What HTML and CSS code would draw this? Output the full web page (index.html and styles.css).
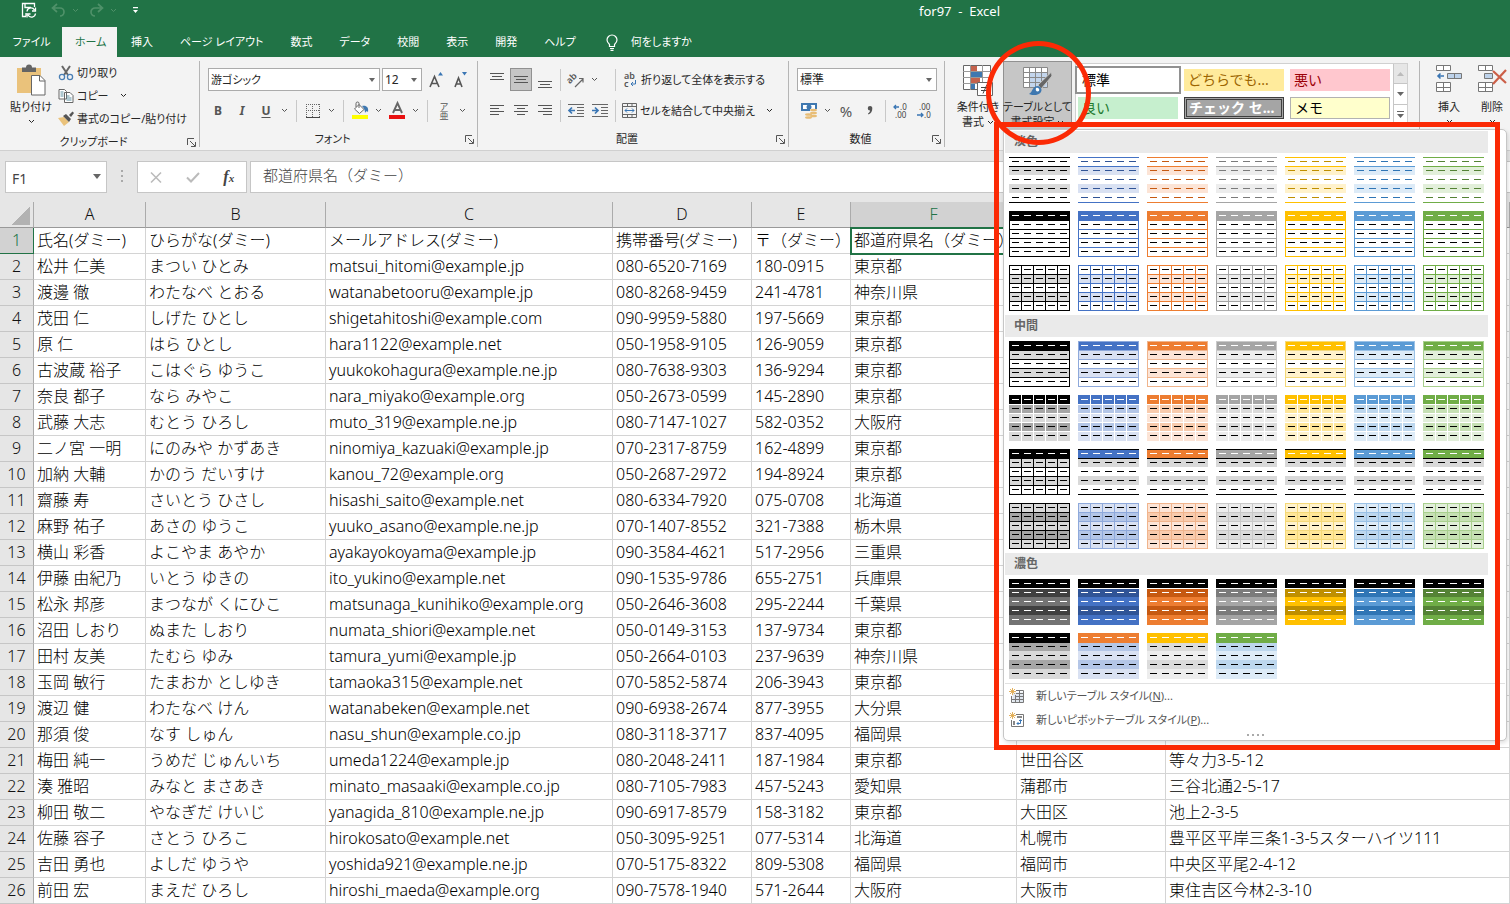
FILE: index.html
```html
<!DOCTYPE html>
<html lang="ja">
<head>
<meta charset="utf-8">
<title>for97 - Excel</title>
<link rel="stylesheet" href="styles.css">
</head>
<body>
<svg class="defs" aria-hidden="true">
  <defs>
    <symbol id="chev" viewBox="0 0 7 5"><path d="M1 1l2.5 2.5L6 1" fill="none" stroke="currentColor"/></symbol>
    <symbol id="launch" viewBox="0 0 9 9"><path d="M.5 7V.5H7M3 3l5 5M8.500 4v4.500H4" fill="none" stroke="#555"/></symbol>
    <g id="head-dash"><path d="M3 4.500h55" stroke-dasharray="7 5"/></g>
    <g id="body-dash"><path d="M3 13.500h55M3 22.500h55M3 31.500h55M3 40.500h55" stroke-dasharray="7 5"/></g>
    <g id="h-lines"><path d="M0 .5h61M0 9.500h61M0 18.500h61M0 27.500h61M0 36.500h61M0 45.500h61"/></g>
    <g id="v-lines"><path d="M.5 0v46M12.500 0v46M24.500 0v46M36.500 0v46M48.500 0v46M60.500 0v46"/></g>
    <g id="v-inner"><path d="M12.500 0v46M24.500 0v46M36.500 0v46M48.500 0v46"/></g>
    <path id="bands" d="M0 9h61v9H0zM0 27h61v9H0z"/>
    <path id="bands2" d="M0 18h61v9H0zM0 36h61v10H0z"/>
    <symbol id="l1" viewBox="0 0 61 46"><use href="#bands" class="f-light"/><path class="s-c" d="M0 .5h61M0 9.500h61M0 45.500h61"/><use href="#head-dash" class="s-dark"/><use href="#body-dash" class="s-dark"/></symbol>
    <symbol id="l2" viewBox="0 0 61 46"><path class="f-c" d="M0 0h61v9H0z"/><use href="#h-lines" class="s-c"/><path class="s-c" d="M.5 0v46M60.500 0v46"/><use href="#head-dash" class="s-w"/><use href="#body-dash" class="s-k"/></symbol>
    <symbol id="l3" viewBox="0 0 61 46"><use href="#bands" class="f-light"/><use href="#h-lines" class="s-c"/><use href="#v-lines" class="s-c"/><use href="#head-dash" class="s-k"/><use href="#body-dash" class="s-k"/></symbol>
    <symbol id="m1" viewBox="0 0 61 46"><path class="f-c" d="M0 0h61v9H0z"/><use href="#bands" class="f-light"/><use href="#h-lines" class="s-m"/><path class="s-m" d="M.5 0v46M60.500 0v46"/><use href="#head-dash" class="s-w"/><use href="#body-dash" class="s-k"/></symbol>
    <symbol id="m2" viewBox="0 0 61 46"><path class="f-c" d="M0 0h61v9H0z"/><use href="#bands" class="f-mid"/><use href="#bands2" class="f-light"/><use href="#v-inner" class="s-w"/><path class="s-w" d="M0 9.500h61M0 18.500h61M0 27.500h61M0 36.500h61"/><use href="#head-dash" class="s-w"/><use href="#body-dash" class="s-k"/></symbol>
    <symbol id="m3" viewBox="0 0 61 46"><path class="f-c" d="M0 0h61v9H0z"/><use href="#bands" class="f-gray"/><path class="s-k" d="M0 .5h61M0 9.500h61M0 45.500h61"/><use href="#head-dash" class="s-w"/><use href="#body-dash" class="s-k"/></symbol>
    <symbol id="m3k" viewBox="0 0 61 46"><use href="#bands" class="f-gray"/><use href="#h-lines" class="s-k"/><use href="#v-lines" class="s-k"/><path d="M0 0h61v9H0z"/><use href="#head-dash" class="s-w"/><use href="#body-dash" class="s-k"/></symbol>
    <symbol id="m4" viewBox="0 0 61 46"><path class="f-light" d="M0 0h61v46H0z"/><use href="#bands" class="f-mid"/><use href="#h-lines" class="s-m"/><use href="#v-lines" class="s-m"/><use href="#head-dash" class="s-k"/><use href="#body-dash" class="s-k"/></symbol>
    <symbol id="d1" viewBox="0 0 61 46"><path d="M0 0h61v9H0z"/><use href="#bands" class="f-deep"/><use href="#bands2" class="f-deep2"/><path class="s-w" d="M0 9.500h61"/><use href="#head-dash" class="s-w"/><use href="#body-dash" class="s-w"/></symbol>
    <symbol id="d2" viewBox="0 0 61 46"><path class="f-h" d="M0 0h61v10H0z"/><use href="#bands" class="f-mid"/><use href="#bands2" class="f-light"/><path class="f-h" d="M0 9h61v1H0z"/><use href="#head-dash" class="s-w"/><use href="#body-dash" class="s-k"/></symbol>
  </defs>
</svg>

<div class="app">
  <header class="titlebar">
    <div class="quick">
      <button class="plain" aria-label="上書き保存"><svg width="16" height="16" viewBox="0 0 16 16" fill="none" stroke="#fff" stroke-width="1.300"><path d="M5 14.500H1.500v-13h12V5M4 1.500v4h6M5 14v-3"/><path d="M6 9.500A4 4 0 0 1 13.500 8M14.500 5.500V9H11M14.500 11.500A4 4 0 0 1 7 13M6 15.500V12h3.500"/></svg></button>
      <button class="plain dim" aria-label="元に戻す"><svg width="15" height="14" viewBox="0 0 15 14" fill="none" stroke="currentColor" stroke-width="1.700"><path d="M6 1L1.500 5 6 9M2 5h7a4 4 0 0 1 0 8"/></svg><svg width="7" height="5"><use href="#chev"/></svg></button>
      <button class="plain dim" aria-label="やり直し"><svg width="15" height="14" viewBox="0 0 15 14" fill="none" stroke="currentColor" stroke-width="1.700"><path d="M9 1l4.500 4L9 9M13 5H6a4 4 0 0 0 0 8"/></svg><svg width="7" height="5"><use href="#chev"/></svg></button>
      <button class="plain" aria-label="クイック アクセス"><svg width="7" height="7" viewBox="0 0 7 7" fill="#fff"><path d="M1 0h5v1.300H1zM1 3h5L3.500 6z"/></svg></button>
    </div>
    <h1 class="title">for97&nbsp; -&nbsp; Excel</h1>
  </header>

  <nav class="tabs">
    <button class="tab file">ファイル</button><button class="tab active">ホーム</button><button class="tab">挿入</button><button class="tab">ページ レイアウト</button><button class="tab">数式</button><button class="tab">データ</button><button class="tab">校閲</button><button class="tab">表示</button><button class="tab">開発</button><button class="tab">ヘルプ</button>
    <button class="tab tell"><svg width="12" height="17" viewBox="0 0 12 17" fill="none" stroke="#fff" stroke-width="1.200"><path d="M3.500 12.500V10.500C2 9 1 7.500 1 6a5 5 0 0 1 10 0c0 1.500-1 3-2.500 4.500v2zM4 14.500h4M4.500 16.300h3"/></svg><span>何をしますか</span></button>
  </nav>

  <section class="ribbon">
    <div class="group g-clip">
      <div class="group-body">
        <button class="big paste">
          <svg width="30" height="31" viewBox="0 0 30 31"><path d="M1 3h24v25H1z" fill="#eac27b"/><path d="M6 2.500h4A3 3 0 0 1 16 2.500h4V7H6z" fill="#646464"/><path d="M15.500 10.500h8.500l5 5v14.500H15.500z" fill="#fff" stroke="#666"/><path d="M23.500 10.500v5.500H29" fill="none" stroke="#666"/></svg>
          <span>貼り付け</span><svg width="7" height="5"><use href="#chev"/></svg>
        </button>
        <div class="clip-list">
          <button class="small"><svg width="16" height="16" viewBox="0 0 16 16" fill="none"><path d="M4 1l6 9M12 1L6 10" stroke="#666" stroke-width="2"/><circle cx="4" cy="12" r="2.600" stroke="#4a7fb5" stroke-width="1.300"/><circle cx="12" cy="12" r="2.600" stroke="#4a7fb5" stroke-width="1.300"/></svg><span>切り取り</span></button>
          <button class="small"><svg width="16" height="16" viewBox="0 0 16 16"><path d="M1 1.500h5.500l2 2V11H1zM6.500 4.500H12l3 3v7H6.500z" fill="#fff" stroke="#666"/><path d="M2.500 4h3M2.500 6h3M2.500 8h3M8.500 8h3M8.500 10h5M8.500 12h5" stroke="#5b8fa0"/></svg><span>コピー</span><svg class="c-gap" width="7" height="5"><use href="#chev"/></svg></button>
          <button class="small"><svg width="16" height="16" viewBox="0 0 16 16"><path d="M0 7l6-1 5 5-5 4z" fill="#eac27b"/><path d="M5 5l3-2 5 5-2 3z" fill="#555"/><path d="M11 4l3.500-3.500L16 2l-3 4z" fill="#555"/></svg><span>書式のコピー/貼り付け</span></button>
        </div>
      </div>
      <div class="group-label"><span>クリップボード</span><svg width="9" height="9"><use href="#launch"/></svg></div>
    </div>

    <div class="group g-font">
      <div class="group-rows">
        <div class="row">
          <span class="sel w-font"><select aria-label="フォント"><option>游ゴシック</option></select></span>
          <span class="sel w-size"><select aria-label="サイズ"><option>12</option></select></span>
          <button class="ic"><svg width="14" height="16" viewBox="0 0 14 16"><path d="M1 15L5.500 4.500 10 15M2.500 11.500h6" fill="none" stroke="#555" stroke-width="1.600"/><path d="M9 3.500L11.500 0 14 3.500z" fill="#3a76b4"/></svg></button>
          <button class="ic"><svg width="14" height="16" viewBox="0 0 14 16"><path d="M2 15L5.500 6 9 15M3 12h5" fill="none" stroke="#555" stroke-width="1.600"/><path d="M9 0h5l-2.500 3.500z" fill="#3a76b4"/></svg></button>
        </div>
        <div class="row">
          <button class="ic b">B</button><button class="ic i">I</button><button class="ic u">U</button><button class="cv"><svg width="7" height="5"><use href="#chev"/></svg></button>
          <i class="vs"></i>
          <button class="ic"><svg width="14" height="14" viewBox="0 0 14 14" fill="none" stroke="#666"><path d="M.5 0v13M0 .5h14M13.500 0v13M0 6.500h14M6.500 0v13" stroke-dasharray="1 1"/><path d="M0 13.500h14" stroke="#444"/></svg></button><button class="cv"><svg width="7" height="5"><use href="#chev"/></svg></button>
          <i class="vs"></i>
          <button class="ic"><svg width="17" height="17" viewBox="0 0 17 17"><path d="M0 13h16v4H0z" fill="#ffff00"/><path d="M2.500 7L7 2.500l5 5L7.500 11.500z" fill="#fff" stroke="#666"/><path d="M7 6V1.500a1.500 1.500 0 0 0-3 0V5" fill="none" stroke="#666"/><path d="M10 4c4-1 7 1 6 6-1-1-2-1-3 1 0-3-1-5-3-7z" fill="#3f78b0"/></svg></button><button class="cv"><svg width="7" height="5"><use href="#chev"/></svg></button>
          <button class="ic"><svg width="17" height="17" viewBox="0 0 17 17"><path d="M0 13h16v4H0z" fill="#e81010"/><path d="M4 11L8.500 1 13 11M5.500 8h6" fill="none" stroke="#666" stroke-width="1.900"/></svg></button><button class="cv"><svg width="7" height="5"><use href="#chev"/></svg></button>
          <i class="vs"></i>
          <button class="ic ruby"><span>ア</span><span>亜</span></button><button class="cv"><svg width="7" height="5"><use href="#chev"/></svg></button>
        </div>
      </div>
      <div class="group-label"><span>フォント</span><svg width="9" height="9"><use href="#launch"/></svg></div>
    </div>

    <div class="group g-align">
      <div class="group-rows">
        <div class="row">
          <button class="ic"><svg width="14" height="16" viewBox="0 0 14 16" stroke="#555"><path d="M0 1.500h14M2 4.500h10M0 7.500h14"/></svg></button>
          <button class="ic on"><svg width="14" height="16" viewBox="0 0 14 16" stroke="#555"><path d="M0 4.500h14M2 7.500h10M0 10.500h14"/></svg></button>
          <button class="ic"><svg width="14" height="16" viewBox="0 0 14 16" stroke="#555"><path d="M0 9.500h14M2 12.500h10M0 15.500h14"/></svg></button>
          <i class="vs"></i>
          <button class="ic"><svg width="17" height="16" viewBox="0 0 17 16"><text x="0" y="8" class="ab" transform="rotate(-45 6 8)">ab</text><path d="M7 15L15 7M15 10.500V6.500h-4" fill="none" stroke="#666" stroke-width="1.200"/></svg></button><button class="cv"><svg width="7" height="5"><use href="#chev"/></svg></button>
          <i class="vs push"></i>
          <button class="small wrap"><svg width="13" height="17" viewBox="0 0 13 17"><text x="0" y="8" class="ab">ab</text><text x="0" y="16" class="ab">c</text><path d="M11.500 9v4H7M9 11l-2 2 2 2" fill="none" stroke="#3a76b4"/></svg><span>折り返して全体を表示する</span></button>
        </div>
        <div class="row">
          <button class="ic"><svg width="14" height="11" viewBox="0 0 14 11" stroke="#555"><path d="M0 .5h14M0 3.500h9M0 6.500h14M0 9.500h9"/></svg></button>
          <button class="ic"><svg width="14" height="11" viewBox="0 0 14 11" stroke="#555"><path d="M0 .5h14M3 3.500h8M0 6.500h14M3 9.500h8"/></svg></button>
          <button class="ic"><svg width="14" height="11" viewBox="0 0 14 11" stroke="#555"><path d="M0 .5h14M5 3.500h9M0 6.500h14M5 9.500h9"/></svg></button>
          <i class="vs"></i>
          <button class="ic"><svg width="17" height="14" viewBox="0 0 17 14"><path d="M0 .5h16M9 3.500h7M9 6.500h7M9 9.500h7M0 12.500h16" stroke="#666"/><path d="M7 6.500H1M4 3.500l-3 3 3 3" stroke="#3a76b4" stroke-width="1.700" fill="none"/></svg></button>
          <button class="ic"><svg width="17" height="14" viewBox="0 0 17 14"><path d="M0 .5h16M9 3.500h7M9 6.500h7M9 9.500h7M0 12.500h16" stroke="#666"/><path d="M0 6.500h6M3 3.500l3 3-3 3" stroke="#3a76b4" stroke-width="1.700" fill="none"/></svg></button>
          <i class="vs"></i>
          <button class="small merge"><svg width="15" height="15" viewBox="0 0 15 15" fill="none"><path d="M.5.5h14v14H.5zM.5 3.500h14M.5 11.500h14M5.500 .5v3M10 .5v3M5.500 11.500v3M10 11.500v3" stroke="#666"/><path d="M3 7.500h9M5 5.500l-2 2 2 2M10 5.500l2 2-2 2" stroke="#3a76b4"/></svg><span>セルを結合して中央揃え</span><svg class="c-gap" width="7" height="5"><use href="#chev"/></svg></button>
        </div>
      </div>
      <div class="group-label"><span>配置</span><svg width="9" height="9"><use href="#launch"/></svg></div>
    </div>

    <div class="group g-num">
      <div class="group-rows">
        <div class="row"><span class="sel w-num"><select aria-label="表示形式"><option>標準</option></select></span></div>
        <div class="row">
          <button class="ic"><svg width="17" height="17" viewBox="0 0 17 17"><path d="M0 1h16v8H0z" fill="#3f78b0"/><path d="M2 3h12v4H2z" fill="#fff"/><circle cx="8" cy="5" r="2.500" fill="#3f78b0"/><path d="M9 7h7v7H9z" fill="#f3f3f3"/><g fill="#e8bd76"><ellipse cx="12.500" cy="8" rx="3.500" ry="1.300"/><ellipse cx="12.500" cy="11" rx="3.500" ry="1.300"/><ellipse cx="12.500" cy="14" rx="3.500" ry="1.300"/><ellipse cx="7.500" cy="12.500" rx="3.500" ry="1.300"/><ellipse cx="7.500" cy="15.500" rx="3.500" ry="1.300"/></g></svg></button><button class="cv"><svg width="7" height="5"><use href="#chev"/></svg></button>
          <button class="ic pct">%</button>
          <button class="ic"><svg width="6" height="9" viewBox="0 0 6 9"><path d="M3 0a2.300 2.300 0 0 1 2.300 2.500C5.300 5.500 4 7.500 1.500 8.500l-.5-1C2.500 6.500 3 5.500 3 4.500A2.200 2.200 0 0 1 3 0z" fill="#555"/></svg></button>
          <i class="vs"></i>
          <button class="ic"><svg width="16" height="16" viewBox="0 0 16 16"><text x="7" y="7" class="dec">.0</text><text x="2" y="15" class="dec">.00</text><path d="M6 4H1M3 2L1 4l2 2" fill="none" stroke="#3a76b4" stroke-width="1.300"/></svg></button>
          <button class="ic"><svg width="16" height="16" viewBox="0 0 16 16"><text x="2" y="7" class="dec">.00</text><text x="7" y="15" class="dec">.0</text><path d="M0 12h6M4 10l2 2-2 2" fill="none" stroke="#3a76b4" stroke-width="1.300"/></svg></button>
        </div>
      </div>
      <div class="group-label"><span>数値</span><svg width="9" height="9"><use href="#launch"/></svg></div>
    </div>

    <div class="group g-style">
      <button class="big cond">
        <svg width="31" height="31" viewBox="0 0 31 31"><path d="M.5.500h27v24H.5z" fill="#fff" stroke="#666"/><path d="M8 1h6v5H8zM8 13h9v5H8z" fill="#c5634d"/><path d="M8 7h11v5H8zM8 19h4v5H8z" fill="#3f78b0"/><path d="M7.500 0v25M19.500 0v25M0 6.500h28M0 12.500h28M0 18.500h28" fill="none" stroke="#999"/><path d="M14.500 17.500h15v13h-15z" fill="#fff" stroke="#666"/><path d="M18 22.500h8M18 25.500h8M24 19.500l-4 9" stroke="#444"/></svg>
        <span>条件付き<br>書式 <svg width="7" height="5"><use href="#chev"/></svg></span>
      </button>
      <button class="big fmt">
        <svg width="31" height="31" viewBox="0 0 31 31"><path d="M1.500 2.500h24v20h-24z" fill="#fff"/><path d="M7 8h19v14H7z" fill="#c3d5ec"/><path d="M1.500 2.500h24v20h-24zM7.500 2.500v20M13.500 2.500v20M19.500 2.500v20M1.500 7.500h24M1.500 12.500h24M1.500 17.500h24" fill="none" stroke="#888"/><path d="M29.500 7L16 20l3 4 11-13z" fill="#666" stroke="#c6c6c6"/><path d="M7 29c4-2 3-8 9-8 5 1 5 8-2 9-3 0-5 0-7-1z" fill="#3f78b0"/><path d="M14 23c2-1 4 1 3 3-2 1-4 0-3-3z" fill="#fff"/></svg>
        <span>テーブルとして<br>書式設定 <svg width="7" height="5"><use href="#chev"/></svg></span>
      </button>
      <div class="gallery">
        <div class="cells">
          <button class="st normal">標準</button><button class="st neutral">どちらでも...</button><button class="st bad">悪い</button>
          <button class="st good">良い</button><button class="st check">チェック セ...</button><button class="st memo">メモ</button>
        </div>
        <div class="scroll">
          <button class="off" aria-label="上"><svg width="7" height="4" viewBox="0 0 7 4"><path d="M0 4h7L3.500 0z" fill="#bbb"/></svg></button>
          <button aria-label="下"><svg width="7" height="4" viewBox="0 0 7 4"><path d="M0 0h7L3.500 4z" fill="#666"/></svg></button>
          <button aria-label="その他"><svg width="7" height="7" viewBox="0 0 7 7"><path d="M0 0h7v1H0zM0 3h7L3.500 7z" fill="#666"/></svg></button>
        </div>
      </div>
    </div>

    <div class="group g-cells">
      <button class="big"><svg width="27" height="29" viewBox="0 0 27 29"><path d="M.5.500h14v5H.5zM7.500 .5v5M.5 17.500h14v9H.5zM7.500 17.500v9M.5 22.500h14" fill="#fff" stroke="#777"/><path d="M11.500 8.500h14v5h-14zM18.500 8.500v5" fill="#bdd2ea" stroke="#777"/><path d="M8 11H2M4.500 8.500L2 11l2.500 2.500" fill="none" stroke="#3a76b4" stroke-width="1.600"/></svg><span>挿入</span><svg width="7" height="5"><use href="#chev"/></svg></button>
      <button class="big"><svg width="29" height="29" viewBox="0 0 29 29"><path d="M.5.500h14v5H.5zM7.500 .5v5M.5 17.500h14v9H.5zM7.500 17.500v9M.5 22.500h14" fill="#fff" stroke="#777"/><path d="M6.500 8.500h8v5h-8z" fill="#bdd2ea" stroke="#777"/><path d="M15 6l13 12M28 5L15 19" fill="none" stroke="#cc5f48" stroke-width="2.200"/></svg><span>削除</span><svg width="7" height="5"><use href="#chev"/></svg></button>
    </div>
  </section>

  <section class="formula">
    <label class="namebox"><input value="F1" aria-label="名前ボックス"></label>
    <svg class="grip" width="2" height="12" viewBox="0 0 2 12" fill="#aaa"><path d="M0 0h2v2H0zM0 5h2v2H0zM0 10h2v2H0z"/></svg>
    <div class="fx">
      <button aria-label="キャンセル"><svg width="12" height="11" viewBox="0 0 12 11"><path d="M1 .5l10 10M11 .5l-10 10" stroke="#bbb" stroke-width="1.600"/></svg></button>
      <button aria-label="入力"><svg width="14" height="11" viewBox="0 0 14 11"><path d="M1 5.500l4 4L13 1" fill="none" stroke="#bbb" stroke-width="2"/></svg></button>
      <button class="fn">f<small>x</small></button>
    </div>
    <input class="fbar" value="都道府県名（ダミー）" aria-label="数式バー">
  </section>

  <table class="sheet">
    <colgroup><col class="c0"><col class="ca"><col class="cb"><col class="cc"><col class="cd"><col class="ce"><col class="cf"><col class="cg"><col></colgroup>
    <thead><tr><th class="corner"></th><th>A</th><th>B</th><th>C</th><th>D</th><th>E</th><th class="cur">F</th><th>G</th><th>H</th></tr></thead>
    <tbody>
      <tr><th class="cur">1</th><td>氏名(ダミー)</td><td>ひらがな(ダミー)</td><td>メールアドレス(ダミー)</td><td>携帯番号(ダミー)</td><td>〒（ダミー）</td><td class="selected">都道府県名（ダミー）</td><td></td><td></td></tr>
      <tr><th>2</th><td>松井 仁美</td><td>まつい ひとみ</td><td>matsui_hitomi@example.jp</td><td>080-6520-7169</td><td>180-0915</td><td>東京都</td><td></td><td></td></tr>
      <tr><th>3</th><td>渡邊 徹</td><td>わたなべ とおる</td><td>watanabetooru@example.jp</td><td>080-8268-9459</td><td>241-4781</td><td>神奈川県</td><td></td><td></td></tr>
      <tr><th>4</th><td>茂田 仁</td><td>しげた ひとし</td><td>shigetahitoshi@example.com</td><td>090-9959-5880</td><td>197-5669</td><td>東京都</td><td></td><td></td></tr>
      <tr><th>5</th><td>原 仁</td><td>はら ひとし</td><td>hara1122@example.net</td><td>050-1958-9105</td><td>126-9059</td><td>東京都</td><td></td><td></td></tr>
      <tr><th>6</th><td>古波蔵 裕子</td><td>こはぐら ゆうこ</td><td>yuukokohagura@example.ne.jp</td><td>080-7638-9303</td><td>136-9294</td><td>東京都</td><td></td><td></td></tr>
      <tr><th>7</th><td>奈良 都子</td><td>なら みやこ</td><td>nara_miyako@example.org</td><td>050-2673-0599</td><td>145-2890</td><td>東京都</td><td></td><td></td></tr>
      <tr><th>8</th><td>武藤 大志</td><td>むとう ひろし</td><td>muto_319@example.ne.jp</td><td>080-7147-1027</td><td>582-0352</td><td>大阪府</td><td></td><td></td></tr>
      <tr><th>9</th><td>二ノ宮 一明</td><td>にのみや かずあき</td><td>ninomiya_kazuaki@example.jp</td><td>070-2317-8759</td><td>162-4899</td><td>東京都</td><td></td><td></td></tr>
      <tr><th>10</th><td>加納 大輔</td><td>かのう だいすけ</td><td>kanou_72@example.org</td><td>050-2687-2972</td><td>194-8924</td><td>東京都</td><td></td><td></td></tr>
      <tr><th>11</th><td>齋藤 寿</td><td>さいとう ひさし</td><td>hisashi_saito@example.net</td><td>080-6334-7920</td><td>075-0708</td><td>北海道</td><td></td><td></td></tr>
      <tr><th>12</th><td>麻野 祐子</td><td>あさの ゆうこ</td><td>yuuko_asano@example.ne.jp</td><td>070-1407-8552</td><td>321-7388</td><td>栃木県</td><td></td><td></td></tr>
      <tr><th>13</th><td>横山 彩香</td><td>よこやま あやか</td><td>ayakayokoyama@example.jp</td><td>090-3584-4621</td><td>517-2956</td><td>三重県</td><td></td><td></td></tr>
      <tr><th>14</th><td>伊藤 由紀乃</td><td>いとう ゆきの</td><td>ito_yukino@example.net</td><td>090-1535-9786</td><td>655-2751</td><td>兵庫県</td><td></td><td></td></tr>
      <tr><th>15</th><td>松永 邦彦</td><td>まつなが くにひこ</td><td>matsunaga_kunihiko@example.org</td><td>050-2646-3608</td><td>295-2244</td><td>千葉県</td><td></td><td></td></tr>
      <tr><th>16</th><td>沼田 しおり</td><td>ぬまた しおり</td><td>numata_shiori@example.net</td><td>050-0149-3153</td><td>137-9734</td><td>東京都</td><td></td><td></td></tr>
      <tr><th>17</th><td>田村 友美</td><td>たむら ゆみ</td><td>tamura_yumi@example.jp</td><td>050-2664-0103</td><td>237-9639</td><td>神奈川県</td><td></td><td></td></tr>
      <tr><th>18</th><td>玉岡 敏行</td><td>たまおか としゆき</td><td>tamaoka315@example.net</td><td>070-5852-5874</td><td>206-3943</td><td>東京都</td><td></td><td></td></tr>
      <tr><th>19</th><td>渡辺 健</td><td>わたなべ けん</td><td>watanabeken@example.net</td><td>090-6938-2674</td><td>877-3955</td><td>大分県</td><td></td><td></td></tr>
      <tr><th>20</th><td>那須 俊</td><td>なす しゅん</td><td>nasu_shun@example.co.jp</td><td>080-3118-3717</td><td>837-4095</td><td>福岡県</td><td></td><td></td></tr>
      <tr><th>21</th><td>梅田 純一</td><td>うめだ じゅんいち</td><td>umeda1224@example.jp</td><td>080-2048-2411</td><td>187-1984</td><td>東京都</td><td>世田谷区</td><td>等々力3-5-12</td></tr>
      <tr><th>22</th><td>湊 雅昭</td><td>みなと まさあき</td><td>minato_masaaki@example.co.jp</td><td>080-7105-7983</td><td>457-5243</td><td>愛知県</td><td>蒲郡市</td><td>三谷北通2-5-17</td></tr>
      <tr><th>23</th><td>柳田 敬二</td><td>やなぎだ けいじ</td><td>yanagida_810@example.ne.jp</td><td>090-6917-8579</td><td>158-3182</td><td>東京都</td><td>大田区</td><td>池上2-3-5</td></tr>
      <tr><th>24</th><td>佐藤 容子</td><td>さとう ひろこ</td><td>hirokosato@example.net</td><td>050-3095-9251</td><td>077-5314</td><td>北海道</td><td>札幌市</td><td>豊平区平岸三条1-3-5スターハイツ111</td></tr>
      <tr><th>25</th><td>吉田 勇也</td><td>よしだ ゆうや</td><td>yoshida921@example.ne.jp</td><td>070-5175-8322</td><td>809-5308</td><td>福岡県</td><td>福岡市</td><td>中央区平尾2-4-12</td></tr>
      <tr><th>26</th><td>前田 宏</td><td>まえだ ひろし</td><td>hiroshi_maeda@example.org</td><td>090-7578-1940</td><td>571-2644</td><td>大阪府</td><td>大阪市</td><td>東住吉区今林2-3-10</td></tr>
    </tbody>
  </table>

  <div class="menu">
    <h2>淡色</h2>
    <div class="thumbs">
      <button class="k"><svg><use href="#l1"/></svg></button><button class="bl"><svg><use href="#l1"/></svg></button><button class="or"><svg><use href="#l1"/></svg></button><button class="gy"><svg><use href="#l1"/></svg></button><button class="ye"><svg><use href="#l1"/></svg></button><button class="sk"><svg><use href="#l1"/></svg></button><button class="gr"><svg><use href="#l1"/></svg></button>
      <button class="k"><svg><use href="#l2"/></svg></button><button class="bl"><svg><use href="#l2"/></svg></button><button class="or"><svg><use href="#l2"/></svg></button><button class="gy"><svg><use href="#l2"/></svg></button><button class="ye"><svg><use href="#l2"/></svg></button><button class="sk"><svg><use href="#l2"/></svg></button><button class="gr"><svg><use href="#l2"/></svg></button>
      <button class="k"><svg><use href="#l3"/></svg></button><button class="bl"><svg><use href="#l3"/></svg></button><button class="or"><svg><use href="#l3"/></svg></button><button class="gy"><svg><use href="#l3"/></svg></button><button class="ye"><svg><use href="#l3"/></svg></button><button class="sk"><svg><use href="#l3"/></svg></button><button class="gr"><svg><use href="#l3"/></svg></button>
    </div>
    <h2>中間</h2>
    <div class="thumbs">
      <button class="k"><svg><use href="#m1"/></svg></button><button class="bl"><svg><use href="#m1"/></svg></button><button class="or"><svg><use href="#m1"/></svg></button><button class="gy"><svg><use href="#m1"/></svg></button><button class="ye"><svg><use href="#m1"/></svg></button><button class="sk"><svg><use href="#m1"/></svg></button><button class="gr"><svg><use href="#m1"/></svg></button>
      <button class="k"><svg><use href="#m2"/></svg></button><button class="bl"><svg><use href="#m2"/></svg></button><button class="or"><svg><use href="#m2"/></svg></button><button class="gy"><svg><use href="#m2"/></svg></button><button class="ye"><svg><use href="#m2"/></svg></button><button class="sk"><svg><use href="#m2"/></svg></button><button class="gr"><svg><use href="#m2"/></svg></button>
      <button class="k"><svg><use href="#m3k"/></svg></button><button class="bl"><svg><use href="#m3"/></svg></button><button class="or"><svg><use href="#m3"/></svg></button><button class="gy"><svg><use href="#m3"/></svg></button><button class="ye"><svg><use href="#m3"/></svg></button><button class="sk"><svg><use href="#m3"/></svg></button><button class="gr"><svg><use href="#m3"/></svg></button>
      <button class="k"><svg><use href="#m4"/></svg></button><button class="bl"><svg><use href="#m4"/></svg></button><button class="or"><svg><use href="#m4"/></svg></button><button class="gy"><svg><use href="#m4"/></svg></button><button class="ye"><svg><use href="#m4"/></svg></button><button class="sk"><svg><use href="#m4"/></svg></button><button class="gr"><svg><use href="#m4"/></svg></button>
    </div>
    <h2>濃色</h2>
    <div class="thumbs">
      <button class="k"><svg><use href="#d1"/></svg></button><button class="bl"><svg><use href="#d1"/></svg></button><button class="or"><svg><use href="#d1"/></svg></button><button class="gy"><svg><use href="#d1"/></svg></button><button class="ye"><svg><use href="#d1"/></svg></button><button class="sk"><svg><use href="#d1"/></svg></button><button class="gr"><svg><use href="#d1"/></svg></button>
      <button class="k"><svg><use href="#d2"/></svg></button><button class="bl"><svg><use href="#d2"/></svg></button><button class="gy"><svg><use href="#d2"/></svg></button><button class="sk"><svg><use href="#d2"/></svg></button>
    </div>
    <div class="items">
      <button><svg width="16" height="16" viewBox="0 0 16 16"><path d="M3.500 4.500h11v10h-11z" fill="#dfe6ee"/><path d="M7 2.500h7.500v12h-12V8M2.500 11.500h12M6 8.500h8.500M7 5.500h7.500M6.500 7v7.500M10.500 2.500v12" fill="none" stroke="#777"/><path d="M3.500 0v7M0 3.500h7M1 1l5 5M6 1L1 6" stroke="#e0a94d" stroke-width=".9"/></svg><span>新しいテーブル スタイル(<u>N</u>)...</span></button>
      <button><svg width="16" height="16" viewBox="0 0 16 16"><path d="M7 2.500h7.500v12h-12V8" fill="none" stroke="#777"/><path d="M8 4h5v2H8zM4 9h2v4H4z" fill="#888"/><path d="M8 11.500h3.500V8M10 9l1.500-1.500L13 9M9.500 10L8 11.500 9.500 13" fill="none" stroke="#3a76b4"/><path d="M3.500 0v7M0 3.500h7M1 1l5 5M6 1L1 6" stroke="#e0a94d" stroke-width=".9"/></svg><span>新しいピボットテーブル スタイル(<u>P</u>)...</span></button>
    </div>
    <svg class="resize" width="17" height="2" viewBox="0 0 17 2" fill="#aaa"><path d="M0 0h2v2H0zM5 0h2v2H5zM10 0h2v2h-2zM15 0h2v2h-2z"/></svg>
  </div>
  <div class="mark-box"></div>
  <div class="mark-circle"></div>
</div>
</body>
</html>
```

FILE: styles.css
```css
* { box-sizing: border-box; }
body {
  margin: 0;
  height: 100vh;
  overflow: hidden;
  font: 12px/16px "Noto Sans", "Noto Sans CJK JP", sans-serif;
  color: #333;
  background: #e6e6e6;
}
button, input, select { font: inherit; color: inherit; margin: 0; }
button { padding: 0; border: 0; background: none; }
svg { display: block; flex: none; overflow: visible; }
.defs { position: absolute; width: 0; height: 0; }
.app { position: relative; height: 100%; display: flex; flex-direction: column; overflow: hidden; }

.titlebar { height: 27px; flex: none; background: #217346; display: flex; padding-left: 21px; }
.quick { display: flex; align-items: center; gap: 14px; height: 20px; }
.plain { display: flex; align-items: center; gap: 7px; }
.plain.dim { color: #4f9169; gap: 6px; margin-right: -4px; }
.plain:last-child { margin-left: 5px; }
.title { flex: 1; margin: 3px 0 0 270px; text-align: center; font-size: 13px; line-height: 16px; font-weight: 400; color: #fff; }

.tabs { height: 30px; flex: none; display: flex; gap: 1px; background: #217346; font-size: 11px; font-feature-settings: "palt"; padding-left: 2px; }
.tab { color: #fff; padding: 0 13px; white-space: nowrap; }
.tab.file { width: 59px; padding: 0 8px; }
.tab.active { background: #f3f3f3; color: #217346; width: 55px; }
.tell { display: flex; align-items: center; gap: 13px; padding-left: 16px; }

.ribbon { height: 94px; flex: none; display: flex; background: #f3f3f3; border-bottom: 1px solid #d0d0d0; font-size: 11px; font-feature-settings: "palt"; padding-top: 4px; color: #262626; overflow: hidden; }
.group { flex: none; display: flex; flex-direction: column; border-right: 1px solid #b5b5b5; height: 86px; }
.group-body { display: flex; height: 72px; }
.group-rows { height: 72px; padding-top: 7px; display: flex; flex-direction: column; gap: 8px; }
.group-label { display: flex; align-items: center; height: 16px; line-height: 16px; padding-right: 3px; margin-top: 4px; }
.group-label span { flex: 1; text-align: center; }
.g-clip .group-label { padding-left: 0; }
.g-clip { width: 200px; }
.g-font { width: 278px; }
.g-align { width: 311px; }
.g-num { width: 156px; }
.g-style { width: 475px; flex-direction: row; padding-left: 9px; height: 90px; }
.g-cells { flex-direction: row; border: 0; padding-left: 8px; gap: 1px; height: 90px; }
.big { display: flex; flex-direction: column; align-items: center; width: 42px; line-height: 15px; padding-top: 4px; white-space: nowrap; gap: 3px; }
.g-cells .big { gap: 5px; }
.g-cells .big > svg:last-child { margin-top: 0; }
.big span svg { display: inline-block; vertical-align: 1px; }
.paste { width: 46px; margin-left: 8px; }
.paste > svg:last-child { margin-top: 2px; }
.clip-list { display: flex; flex-direction: column; padding-left: 4px; }
.small { display: flex; align-items: center; gap: 3px; height: 23px; white-space: nowrap; }
.c-gap { margin-left: 8px; }

.row { display: flex; align-items: center; height: 23px; }
.ic { width: 24px; height: 23px; display: flex; align-items: center; justify-content: center; flex: none; color: #555; }
.ic.on { background: #c6c6c6; border: 1px solid #919191; width: 22px; margin: 0 1px; }
.ic.b, .ic.i, .ic.u { font-size: 12px; font-weight: 700; }
.ic.i { font-style: italic; }
.ic.u { text-decoration: underline; text-underline-offset: 2px; }
.ic.pct { font-size: 15px; }
.ruby { flex-direction: column; font: 9px/9px "Noto Sans CJK JP", sans-serif; }
.cv { width: 13px; height: 23px; display: flex; align-items: center; justify-content: center; color: #555; }
.vs { width: 1px; height: 22px; background: #c8c8c8; margin: 0 4px 0 5px; flex: none; }
.sel { position: relative; height: 23px; }
.sel select { appearance: none; width: 100%; height: 23px; border: 1px solid #ababab; border-radius: 0; background: #fff; padding: 0 2px; }
.sel::after, .namebox::after { content: ""; position: absolute; right: 5px; top: 10px; border: 3px solid transparent; border-top: 4px solid #666; border-bottom: 0; }
.w-font { width: 172px; margin-right: 2px; }
.w-size { width: 40px; margin-right: 2px; font-size: 12px; }
.w-num { width: 140px; font-size: 12px; }
.g-font .group-rows { padding-left: 8px; }
.g-font .row + .row { margin-left: -2px; }
.g-align .group-rows { padding-left: 7px; }
.g-align .vs { margin: 0 3px; }
.g-align .vs.push { margin-left: 14px; margin-right: 6px; }
.g-align .vs:last-of-type { margin-right: 6px; }
.g-num .group-rows { padding-left: 8px; }
.g-num .vs { margin: 0 3px; }
.wrap { gap: 4px; margin-left: 2px; }
.ab { font: 600 9px "Noto Sans", sans-serif; fill: #555; }
.dec { font: 8px "Noto Sans", sans-serif; fill: #444; }

.cond { width: 48px; }
.fmt { width: 69px; height: 69px; background: #c6c6c6; border: 1px solid #919191; padding-top: 3px; margin-left: 1px; }
.gallery { display: flex; margin: 2px 0 0 3px; width: 333px; height: 63px; border: 1px solid #d0d0d0; background: #fff; }
.cells { flex: 1; display: grid; grid-template-columns: repeat(3, 100px); grid-auto-rows: 22px; gap: 6px; padding: 5px 0 0 2px; }
.st { text-align: left; padding: 0 4px; font-size: 14px; line-height: 20px; white-space: nowrap; overflow: hidden; font-feature-settings: normal; }
.normal { outline: 2px solid #919191; outline-offset: 1px; color: #000; }
.neutral { background: #ffeb9c; color: #9c6500; }
.bad { background: #ffc7ce; color: #9c0006; }
.good { background: #c6efce; color: #1f7a2e; }
.check { background: #a5a5a5; color: #fff; font-weight: 700; border: 3px double #3f3f3f; padding: 0 2px; line-height: 16px; }
.memo { background: #ffffcc; border: 1px solid #b2b2b2; color: #000; }
.scroll { width: 14px; display: flex; flex-direction: column; border-left: 1px solid #c6c6c6; }
.scroll button { flex: 1; display: flex; align-items: center; justify-content: center; border-bottom: 1px solid #c6c6c6; }
.scroll .off { background: #e6e6e6; }

.formula { display: flex; height: 51px; flex: none; padding: 10px 0 9px 5px; color: #444; font-size: 14px; }
.formula > * { height: 32px; }
.namebox { position: relative; width: 102px; }
.namebox::after { top: 13px; right: 6px; border-width: 5px 4px 0; }
.namebox input { width: 100%; height: 32px; border: 1px solid #c6c6c6; padding: 2px 6px 0; background: #fff; }
.formula .grip { height: 12px; margin: 9px 14px 0; }
.fx { width: 110px; border: 1px solid #c6c6c6; background: #fff; display: flex; align-items: center; justify-content: space-around; margin-right: 3px; }
.fn { font: italic 700 16px "Liberation Serif", serif; }
.fn small { font-size: 11px; }
.fbar { flex: 1; border: 1px solid #c6c6c6; border-right: 0; padding: 0 12px 6px; font-weight: 300; font-size: 15px; font-family: "Noto Sans CJK JP", sans-serif; }

.sheet { table-layout: fixed; width: 100%; border-collapse: separate; border-spacing: 0; font-size: 16px; line-height: 25px; color: #000; font-weight: 300; font-family: "Noto Sans", "Noto Sans CJK JP", sans-serif; }
.c0 { width: 34px; } .ca { width: 112px; } .cb { width: 180px; } .cc { width: 287px; } .cd { width: 139px; } .ce { width: 99px; } .cf { width: 166px; } .cg { width: 149px; }
.sheet th { font-weight: 300; padding: 0; height: 26px; border-right: 1px solid #ababab; border-bottom: 1px solid #c6c6c6; color: #111; background: #e6e6e6; }
.sheet thead th { border-bottom-color: #999; }
.sheet td { background: #fff; padding: 0 3px; height: 26px; border-right: 1px solid #d4d4d4; border-bottom: 1px solid #d4d4d4; white-space: nowrap; overflow: hidden; }
.sheet th.cur { background: #d2d2d2; color: #217346; border-color: #217346; }
.sheet td.selected { outline: 2px solid #217346; outline-offset: -1px; }
.sheet .corner { background: linear-gradient(135deg, transparent 50%, #b2b2b2 50%) 12px 5px / 18px 18px no-repeat #e6e6e6; }

.menu { position: absolute; left: 1003px; top: 129px; width: 504px; height: 612px; padding: 1px; background: #fff; border: 1px solid #c6c6c6; border-radius: 0 5px 5px 5px; box-shadow: 1px 2px 4px #0002; }
.menu h2 { margin: 0 17px 0 0; height: 22px; background: #eaeaea; padding-left: 9px; font-size: 12px; line-height: 22px; font-weight: 700; color: #666; }
.thumbs { display: grid; grid-template-columns: repeat(7, 61px); gap: 8px; padding: 4px; }
.thumbs button { height: 46px; }
.thumbs svg { width: 61px; height: 46px; }
.items { border-top: 1px solid #e1e1e1; font-size: 11px; font-feature-settings: "palt"; color: #555; }
.items button { display: flex; align-items: center; gap: 11px; height: 24px; padding-left: 4px; width: 100%; }
.resize { margin: 2px auto 0; }

.s-c { stroke: var(--c); } .s-m { stroke: var(--m); } .s-dark { stroke: var(--d); }
.s-w { stroke: #fff; } .s-k { stroke: #000; }
.f-c { fill: var(--c); } .f-light { fill: var(--l); } .f-mid { fill: var(--f); }
.f-gray { fill: #d9d9d9; } .f-deep { fill: var(--p); } .f-deep2 { fill: var(--q); } .f-h { fill: var(--h); }
.k { --c: #000; --m: #000; --d: #000; --l: #d9d9d9; --f: #a6a6a6; --p: #404040; --q: #737373; --h: #000; }
.bl { --c: #4472c4; --m: #8ea9db; --d: #305496; --l: #d9e1f2; --f: #b4c6e7; --p: #305496; --q: #4472c4; --h: #ed7d31; }
.or { --c: #ed7d31; --m: #f0b48c; --d: #c65911; --l: #fce4d6; --f: #f8cbad; --p: #c65911; --q: #ed7d31; }
.gy { --c: #a5a5a5; --m: #c9c9c9; --d: #7b7b7b; --l: #ededed; --f: #dbdbdb; --p: #7b7b7b; --q: #a5a5a5; --h: #ffc000; }
.ye { --c: #ffc000; --m: #f5d978; --d: #bf8f00; --l: #fff2cc; --f: #ffe699; --p: #bf8f00; --q: #ffc000; }
.sk { --c: #5b9bd5; --m: #9bc2e6; --d: #2f75b5; --l: #ddebf7; --f: #bdd7ee; --p: #2f75b5; --q: #5b9bd5; --h: #70ad47; }
.gr { --c: #70ad47; --m: #a9d08e; --d: #548235; --l: #e2efda; --f: #c6e0b4; --p: #548235; --q: #70ad47; }

.mark-box { position: absolute; left: 994px; top: 122px; width: 506px; height: 628px; border: 5px solid #fb2a05; pointer-events: none; }
.mark-circle { position: absolute; left: 986px; top: 41px; width: 105px; height: 104px; border: 5px solid #fb2a05; border-radius: 50%; pointer-events: none; }
```
